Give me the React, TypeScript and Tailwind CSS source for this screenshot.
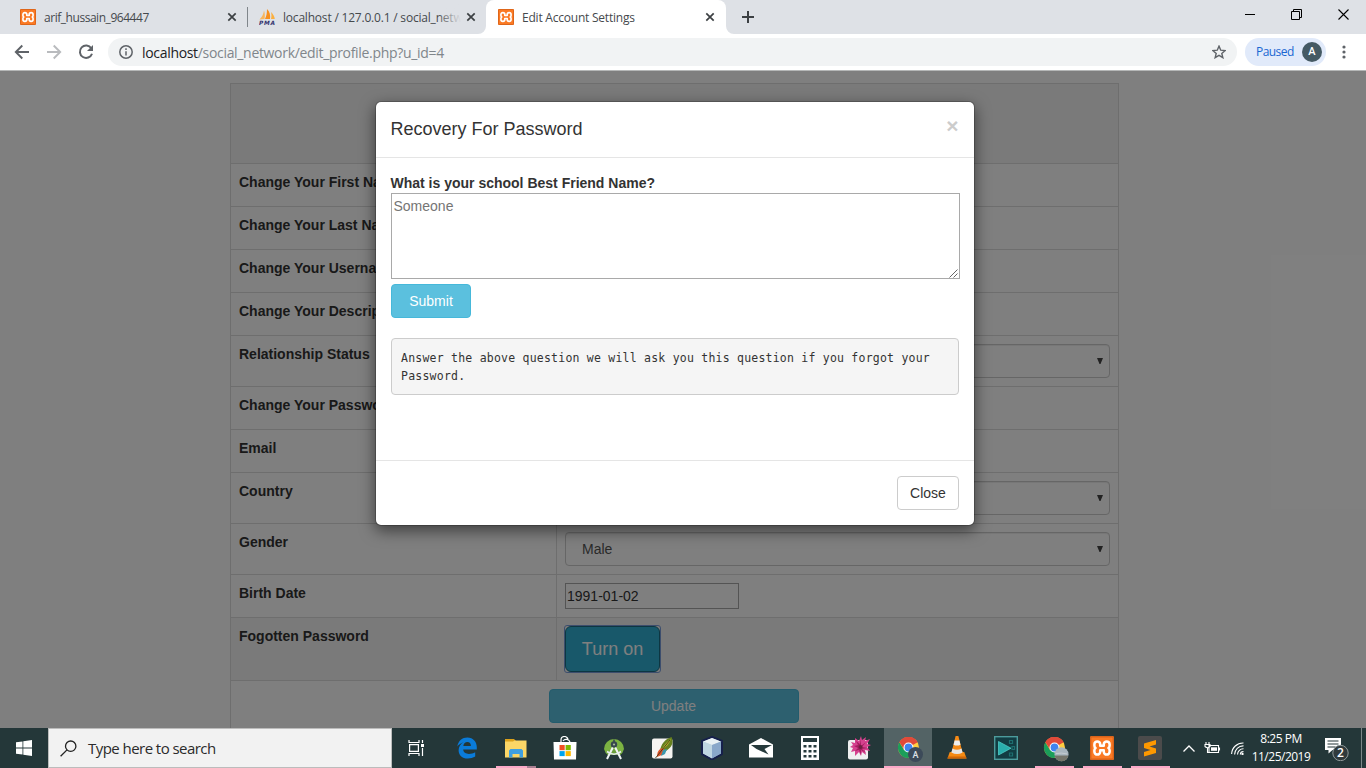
import type { ReactNode } from 'react';

const UI = "font-['Open_Sans','Noto_Sans',sans-serif]";

function XamppIcon({ size }: { size: number }) {
  return (
    <svg width={size} height={size} viewBox="0 0 24 24" className="shrink-0">
      <rect width="24" height="24" rx="1.5" fill="#fb7a24" />
      <rect x=".7" y=".7" width="22.6" height="22.6" rx="1.2" fill="none" stroke="#d9631a" strokeWidth="1.4" />
      <path d="M10.200 9.700h3.600V8.300a2.900 2.900 0 0 1 2.900-2.900a2.900 2.900 0 0 1 2.900 2.900v1.400q0 1.500-1.200 2.300q1.200.8 1.200 2.300v1.400a2.900 2.900 0 0 1-2.900 2.900a2.900 2.900 0 0 1-2.900-2.900v-1.400h-3.600v1.400a2.900 2.900 0 0 1-2.900 2.900a2.900 2.900 0 0 1-2.900-2.900v-1.400q0-1.500 1.200-2.300q-1.200-.8-1.200-2.300V8.300a2.900 2.900 0 0 1 2.900-2.900a2.900 2.900 0 0 1 2.900 2.900Z" fill="none" stroke="#fff" strokeWidth="2.500" strokeLinejoin="round" />
    </svg>
  );
}

function PmaIcon() {
  return (
    <svg width="16" height="16" viewBox="0 0 16 16" className="shrink-0">
      <path d="M.5 10.500C3 8 4.500 5 5 1.500c1 3 1 6 .5 8.500Z" fill="#f9b55c" />
      <path d="M6 10C7.500 7 8 4 8 0c3 3 3.500 6.500 3 10Z" fill="#f78f1e" />
      <path d="M12 10c.6-2.500.6-4.500 0-7 2 1.500 3.500 4.500 3.800 7Z" fill="#fbb040" />
      <text x="0" y="15.600" fontSize="5.800" fontWeight="700" fontStyle="italic" textLength="16" fill="#33336e" fontFamily="DejaVu Sans">PMA</text>
    </svg>
  );
}

function Cross({ color = '#3c4043' }: { color?: string }) {
  return (
    <svg width="10" height="10" viewBox="0 0 10 10" className="shrink-0">
      <path d="M1.300 1.300l7.400 7.400M8.700 1.300L1.300 8.700" stroke={color} strokeWidth="1.700" />
    </svg>
  );
}

function Tab({ icon, title, width, fade, line }: { icon: ReactNode; title: string; width: string; fade?: boolean; line?: boolean }) {
  return (
    <div className="relative flex h-full w-[239px] shrink-0 items-center pl-3">
      {icon}
      <div className="relative -top-px ml-2 w-[178px] overflow-hidden whitespace-nowrap">
        <span className={`text-[12px] leading-[18px] text-[#45494d] ${width}`}>{title}</span>
        {fade && <div className="absolute inset-y-0 right-0 w-6 bg-gradient-to-r from-[#dee1e6]/0 to-[#dee1e6]" />}
      </div>
      <span className="ml-[5px] flex"><Cross /></span>
      {line && <div className="absolute -right-px top-[7px] h-5 w-px bg-[#80868b]" />}
    </div>
  );
}

function Browser() {
  return (
    <>
      <div className="flex h-[34px] shrink-0 items-center bg-[#dee1e6] pl-2">
        <Tab icon={<XamppIcon size={16} />} title="arif_hussain_964447" width="tracking-[-0.46px]" line />
        <Tab icon={<PmaIcon />} title="localhost / 127.0.0.1 / social_network" width="tracking-[-0.2px]" fade />
        <div className="relative h-full w-60 shrink-0 rounded-t-lg bg-white">
          <Tab icon={<XamppIcon size={16} />} title="Edit Account Settings" width="tracking-[-0.22px]" />
          <svg width="8" height="8" className="absolute -left-2 bottom-0"><path d="M8 0a8 8 0 0 1-8 8h8Z" fill="#fff" /></svg>
          <svg width="8" height="8" className="absolute -right-2 bottom-0"><path d="M0 0a8 8 0 0 0 8 8H0Z" fill="#fff" /></svg>
        </div>
        <svg width="12" height="12" className="ml-4"><path d="M6 0v12M0 6h12" stroke="#3c4043" strokeWidth="2" /></svg>
        <div className="mb-[5px] ml-auto mr-[17px] flex items-center gap-9">
          <svg width="10" height="11"><path d="M0 5.500h10" stroke="#000" /></svg>
          <svg width="11" height="11" fill="none" stroke="#000"><path d="M.5 2.500h8v8h-8zM2.500 2.500v-2h8v8h-2" /></svg>
          <svg width="11" height="11"><path d="M.5.5l10 10M10.500.5l-10 10" stroke="#000" strokeWidth="1.100" /></svg>
        </div>
      </div>
      <div className="flex h-9 shrink-0 items-center bg-white">
        <svg width="16" height="16" viewBox="0 0 16 16" className="ml-[14px]" fill="none" stroke="#5f6368" strokeWidth="1.900"><path d="M15 8H2M8.300 1.500L1.800 8l6.500 6.500" /></svg>
        <svg width="16" height="16" viewBox="0 0 16 16" className="ml-4" fill="none" stroke="#b9bbbe" strokeWidth="1.900"><path d="M1 8h13M7.700 1.500L14.200 8l-6.500 6.500" /></svg>
        <svg width="16" height="16" viewBox="0 0 16 16" className="ml-4" fill="none" stroke="#5f6368" strokeWidth="2"><path d="M13.300 4.300A6.200 6.200 0 1 0 14 9.700" /><path d="M15 1v6H9Z" fill="#5f6368" stroke="none" /></svg>
        <div className="ml-[14px] flex h-7 w-[1129px] items-center rounded-full bg-[#f1f3f4] pl-[11px] pr-[11px]">
          <svg width="14" height="14" fill="none" stroke="#5f6368" strokeWidth="1.500"><circle cx="7" cy="7" r="6.200" /><path d="M7 6.200v4.200M7 3.300v1.600" /></svg>
          <span className="ml-[9px] text-[14px] tracking-[-0.32px] text-[#80868b]"><span className="text-[#202124]">localhost</span>/social_network/edit_profile.php?u_id=4</span>
          <svg width="14" height="14" viewBox="0 0 16 16" className="ml-auto" fill="none" stroke="#5f6368" strokeWidth="1.600"><path d="M8 1.300l2 4.600 5 .4-3.800 3.300 1.200 4.900L8 11.900l-4.400 2.600 1.200-4.900L1 6.300l5-.4Z" /></svg>
        </div>
        <div className="ml-2 flex h-7 w-[81px] items-center justify-between rounded-full bg-[#e1eafa] pl-[11px] pr-1">
          <span className="text-[12px] tracking-[-0.55px] text-[#1967d2]">Paused</span>
          <span className="flex size-5 items-center justify-center rounded-full bg-[#455a64] font-['Roboto',sans-serif] text-[11px] font-medium text-white">A</span>
        </div>
        <svg width="4" height="14" className="ml-4" fill="#5f6368"><circle cx="2" cy="2" r="1.600" /><circle cx="2" cy="7" r="1.600" /><circle cx="2" cy="12" r="1.600" /></svg>
      </div>
      <div className="h-px shrink-0 bg-[#b5b7b7]" />
    </>
  );
}

function Row({ label, height, children, dark }: { label: string; height: string; children?: ReactNode; dark?: boolean }) {
  return (
    <div className={`flex border-b border-[#ddd] ${height} ${dark ? 'bg-[#f5f5f5]' : ''}`}>
      <div className="w-[326px] shrink-0 border-r border-[#ddd] p-2 font-bold">{label}</div>
      <div className="grow p-2">{children}</div>
    </div>
  );
}

function SelectBox({ value }: { value: string }) {
  return (
    <div className="flex h-[34px] items-center justify-between rounded border border-[#ccc] pl-4 pr-[6px] text-[#555] shadow-[inset_0_1px_1px_rgba(0,0,0,0.075)]">
      <span>{value}</span>
      <svg width="6" height="7"><path d="M0 0h6L3.500 6h-1Z" fill="#444" /></svg>
    </div>
  );
}

function Page() {
  return (
    <div className="relative h-[657px] shrink-0 overflow-hidden bg-white font-['Liberation_Sans',Arial,sans-serif] text-[14px] leading-5 text-[#333]">
      <div className="ml-[230px] mt-3 w-[889px] border border-[#ddd]">
        <div className="h-20 border-b border-[#ddd] bg-[#f5f5f5]" />
        <Row label="Change Your First Name" height="h-[43px]" />
        <Row label="Change Your Last Name" height="h-[43px]" />
        <Row label="Change Your Username" height="h-[43px]" />
        <Row label="Change Your Description" height="h-[43px]" />
        <Row label="Relationship Status" height="h-[51px]"><SelectBox value="" /></Row>
        <Row label="Change Your Password" height="h-[43px]" />
        <Row label="Email" height="h-[43px]" />
        <Row label="Country" height="h-[51px]"><SelectBox value="" /></Row>
        <Row label="Gender" height="h-[51px]"><SelectBox value="Male" /></Row>
        <Row label="Birth Date" height="h-[43px]">
          <div className="h-[26px] w-[174px] border border-[#a9a9a9] px-px leading-6">1991-01-02</div>
        </Row>
        <Row label="Fogotten Password" height="h-[63px]" dark>
          <div className="h-[46px] w-[95px] rounded-md border border-[#1b6d85] bg-[#31b0d5] text-center text-[18px] leading-[44px] text-white">
            <div className="relative -left-[2px] -top-[2px] h-12 w-[97px] rounded-[3px] border border-[#7a9ddb] leading-[46px]">Turn on</div>
          </div>
        </Row>
        <div className="flex h-[60px] justify-center pr-[2px] pt-2">
          <div className="h-[34px] w-[250px] rounded border border-[#46b8da] bg-[#5bc0de] text-center leading-8 text-white">Update</div>
        </div>
      </div>
      <div className="absolute inset-0 flex items-start justify-center bg-black/50 pr-4 pt-[30px]">
        <div className="flex h-[425px] w-[600px] flex-col rounded-md border border-black/20 bg-white bg-clip-padding shadow-[0_5px_15px_rgba(0,0,0,0.5)]">
          <div className="flex h-14 shrink-0 justify-between border-b border-[#e5e5e5] pl-[14.5px] pr-[15.5px] pt-[14px]">
            <h4 className="text-[18px] leading-[26px]">Recovery For Password</h4>
            <span className="-mt-px text-[21px] font-bold leading-[21px] text-[#ccc]">×</span>
          </div>
          <div className="flex h-[302px] shrink-0 flex-col items-start px-[15px] pt-[15px]">
            <strong className="-ml-[0.5px]">What is your school Best Friend Name?</strong>
            <div className="relative h-[86px] w-[569px] shrink-0 border border-[#a9a9a9] px-[1.5px] py-[2px] text-[#757575]">
              Someone
              <svg width="9" height="9" className="absolute bottom-0 right-px"><path d="M.5 8.500l8-8M4.500 8.500l4-4" stroke="#555" strokeWidth=".9" /></svg>
            </div>
            <div className="mt-[5px] h-[34px] w-20 shrink-0 rounded border border-[#46b8da] bg-[#5bc0de] text-center leading-8 text-white">Submit</div>
            <pre className="mt-5 h-[57px] w-full shrink-0 rounded border border-[#ccc] bg-[#f5f5f5] px-[9px] py-[9.5px] font-['DejaVu_Sans_Mono',monospace] text-[11.500px] leading-[18.500px] tracking-[0.225px]">{'Answer the above question we will ask you this question if you forgot your\nPassword.'}</pre>
          </div>
          <div className="flex grow justify-end border-t border-[#e5e5e5] px-[15px] pt-[15px]">
            <div className="h-[34px] w-[62px] rounded border border-[#ccc] text-center leading-8">Close</div>
          </div>
        </div>
      </div>
    </div>
  );
}

function ChromeMark({ children }: { children: ReactNode }) {
  return (
    <svg width="26" height="26" viewBox="0 0 26 26">
      <circle cx="11.500" cy="11.500" r="10.500" fill="#ffcd40" />
      <path d="M11.500 11.500L2.400 6.200a10.500 10.500 0 0 1 18.200 0Z" fill="#e04a3a" />
      <path d="M2.400 6.200A10.500 10.500 0 0 0 11.500 22l4.500-8L7 14Z" fill="#1b9e5a" />
      <path d="M2.400 6.200A10.500 10.500 0 0 1 20.600 6.200H11.500L6.800 13Z" fill="#e04a3a" />
      <circle cx="11.500" cy="11.500" r="5" fill="#fff" />
      <circle cx="11.500" cy="11.500" r="3.900" fill="#3f84f0" />
      {children}
    </svg>
  );
}

const ICONS: ReactNode[] = [
  <svg width="20" height="22" viewBox="0 0 20 22"><path d="M.3 9.600C1.200 3.600 5.400.5 10.300.5 16.300.5 19.800 5 19.800 10v2.600H6.200c.2 3 2.700 4.300 5.700 4.300 2.300 0 4.500-.7 6.300-1.700v4.400c-2.100 1.200-4.600 1.900-7.300 1.900C5 21.500 1.600 18 1.600 13.200c0-3.700 2-6.500 5-8C4 6 1.800 7.300.3 9.600ZM6.300 8.900h7.600c0-2.400-1.300-3.800-3.500-3.800S6.700 6.600 6.300 8.900Z" fill="#0a7bd9" /></svg>,
  <svg width="22" height="19" viewBox="0 0 22 19"><path d="M0 0h9l2 2v3H0Z" fill="#dca11b" /><path d="M0 2.500h8l1.500-1H21.500v17H0Z" fill="#fbd667" /><path d="M4 18.500v-7l1.500-1.500h11l1.500 1.500v7h-3.500V15h-7v3.500Z" fill="#3f9fe0" /></svg>,
  <svg width="24" height="24" viewBox="0 0 24 24"><path d="M8 7V4a3.500 3.500 0 0 1 7 0M10 5a4 4 0 0 1 7 1" fill="none" stroke="#fff" strokeWidth="1.200" /><path d="M.5 6h23L23 23.500H1Z" fill="#fff" /><path d="M6.500 9h5.200v5.200H6.500z" fill="#f25022" /><path d="M12.600 9h5.200v5.200h-5.200z" fill="#7fba00" /><path d="M6.500 15.100h5.200v5H6.500z" fill="#00a4ef" /><path d="M12.600 15.100h5.200v5h-5.200z" fill="#ffb900" /></svg>,
  <svg width="22" height="24" viewBox="0 0 22 24"><path d="M1 13a10 10 0 1 1 20 0q-1 4-4 6H5q-3-2-4-6Z" fill="#7cb342" /><path d="M3 16q8-5 16 0l-2 3H5Z" fill="#6a9f3b" /><path d="M10.200 3.500h1.600v3h-1.600z" fill="#37474f" /><circle cx="11" cy="8.500" r="3.200" fill="#37474f" /><circle cx="11" cy="8.500" r="1.100" fill="#a6bd92" /><path d="M9.800 11.500L4 23M12.200 11.500L18 23" stroke="#f1f5f6" strokeWidth="2" /><path d="M4 15.500q7 5.500 14 0" fill="none" stroke="#e8eef0" strokeWidth="1.600" /></svg>,
  <svg width="22" height="22" viewBox="0 0 22 22"><rect x="0" y="1.500" width="20.500" height="20" rx="2" fill="#f5f4f1" /><path d="M8 14C9 7 13 2 19.500 0c2 4 1 9-3 12l-5 4Z" fill="#66801f" /><path d="M10 12q4-7 9-10-2 6-8 10Z" fill="#b5b52b" /><path d="M5 20c0-5 2-8 5-9l3 2-1 4Z" fill="#de5328" /><path d="M9 19l2-6 4-1-2 5Z" fill="#3b98ad" /><path d="M3.500 21L18 3" stroke="#463816" strokeWidth=".9" /></svg>,
  <svg width="22" height="24" viewBox="0 0 22 24"><path d="M11 1l10 4v13l-10 5.500L1 18V5Z" fill="#bfd3df" stroke="#16204b" strokeWidth="2" strokeLinejoin="round" /><path d="M2 5.600L11 9l9-3.400L11 2Z" fill="#e8f1f4" /><path d="M11 9l9-3.400V17.500L11 22.500Z" fill="#89a8ca" /><path d="M2 5.600L11 9v13.500L2 17.500Z" fill="#bfd6e2" /></svg>,
  <svg width="24" height="20" viewBox="0 0 24 20"><path d="M0 6.500L12 0l12 6.500v13H0Z" fill="#fff" /><path d="M2 7h21l-7.500 4 4 5.500L7.500 11Z" fill="#263a3c" /></svg>,
  <svg width="18" height="24" viewBox="0 0 18 24"><path d="M0 0h18v24H0Z" fill="#fff" /><path d="M2 2h14v4H2zM2.500 9h3v2.500h-3zM7.500 9h3v2.500h-3zM12.500 9h3v2.500h-3zM2.500 14h3v2.500h-3zM7.500 14h3v2.500h-3zM12.500 14h3v2.500h-3zM2.500 19h3v2.500h-3zM7.500 19h3v2.500h-3zM12.500 19h3v2.500h-3z" fill="#263a3c" /></svg>,
  <svg width="24" height="24" viewBox="0 0 24 24"><rect x="1" y="4" width="20" height="19.500" rx="2" fill="#efeff0" /><path d="M14 0l1 4 4-3-1 4 5-2-3 5 4 1-4 2 3 4-5-1 1 5-4-3-1 4-2-4-4 4v-5l-4 1 2-4-3-1 3-2-2-3 4 1V2l4 3Z" fill="#d5418e" /><path d="M14 3v7l5-4-4 5 6 1-6 1 4 4-5-3v5l-2-5-4 1 3-3-4-2 4-1-2-4 4 3Z" fill="#a51e61" /><circle cx="13.500" cy="11" r="2" fill="#6f1e42" /></svg>,
  <ChromeMark><circle cx="18.500" cy="18.500" r="7.500" fill="#3c4a59" /><text x="18.500" y="21.800" fill="#dde2e6" fontSize="9" fontWeight="500" textAnchor="middle" fontFamily="Roboto">A</text></ChromeMark>,
  <svg width="20" height="23" viewBox="0 0 22 23" preserveAspectRatio="none"><path d="M3 16h16l2.500 6.500H.5Z" fill="#f48b13" /><path d="M9.500 0h3l5 18q-6.500 3-13 0Z" fill="#f58a16" /><path d="M8.400 4.500h5.300l1.200 4.200q-4 1.700-7.700 0Z" fill="#eeeeed" /><path d="M6 12.500q5 2.500 10 0l1.200 4q-6 3-12.400 0Z" fill="#e6e5e3" /><path d="M.5 22.500l.7-2h19.600l.7 2Z" fill="#cf6708" /></svg>,
  <svg width="24" height="24" viewBox="0 0 24 24"><rect x=".7" y=".7" width="22.600" height="22.600" fill="#123d43" stroke="#4c9b9c" strokeWidth="1.400" /><path d="M4.500 5.500l12.500 6.700L4.500 19Z" fill="#2aaeac" stroke="#54d6cf" strokeWidth=".7" /><path d="M15.500 4.500h3v3h-3zM18 10.500h2.500v3H18zM15.500 17h3v3h-3z" fill="none" stroke="#1d6f70" strokeWidth="1.200" /></svg>,
  <ChromeMark><circle cx="18.500" cy="18.300" r="7" fill="#a9b6be" /><path d="M11.600 19.500h13.800a7 7 0 0 1-13.800 0Z" fill="#75756a" /><path d="M13 17.600q5-1.200 11 .3" stroke="#c5ccd0" strokeWidth="1" fill="none" /></ChromeMark>,
  <XamppIcon size={24} />,
  <svg width="24" height="24" viewBox="0 0 24 24"><rect width="24" height="24" rx="2" fill="#4b4b4b" /><path d="M18 4v4.500L11.500 10.500L18 12.500V17L6 20.500V16l6.500-2L6 12V7.500Z" fill="#ff9800" /></svg>,
];

const CELLS = [
  '', '', '', '', '', '', '', '', '', 'bg-[#536365]', '', '', '', '-ml-px', '-ml-px',
];
const SHIFT = [
  '', '', 'pb-px', 'pb-px', '', 'pb-px', '', '', '', 'pl-1 pt-[2px]', 'pb-px', '', 'pl-[2px] pt-[2px]', 'pr-[2px]', 'pr-[2px]',
];

function Taskbar() {
  return (
    <div className="flex h-10 shrink-0 items-stretch bg-[#243739] text-white">
      <div className="flex w-12 items-center justify-center">
        <svg width="16" height="16" viewBox="0 0 16 16"><path d="M0 2.300l6.500-.9v6.100H0ZM7.300 1.300L16 0v7.500H7.300ZM0 8.400h6.500v6.200L0 13.700ZM7.300 8.400H16V16l-8.700-1.200Z" fill="#fff" /></svg>
      </div>
      <div className="flex w-[344px] items-center border border-[#bcbcbc] bg-[#f2f2f2] pl-[11px]">
        <svg width="17" height="17" fill="none" stroke="#222" strokeWidth="1.300"><circle cx="10.700" cy="6.200" r="5.200" /><path d="M7 9.900L.6 16.300" /></svg>
        <span className="ml-[11px] text-[15px] tracking-[-0.55px] text-[#2b2b2b]">Type here to search</span>
      </div>
      <div className="mr-[3px] flex w-12 items-center justify-center">
        <svg width="17" height="16" fill="none" stroke="#fff" strokeWidth="1.200"><path d="M1 0v2.500h10V0M1 16v-2.500h10V16M1.600 4.600h8.800v6.800H1.600zM14.500 0v3M14.500 8v8" /><path d="M13 4h3v3h-3z" fill="#fff" stroke="none" /></svg>
      </div>
      <div className="flex gap-px">
        {ICONS.map((icon, i) => (
          <div key={i} className={`relative flex w-12 items-center justify-center ${CELLS[i]} ${SHIFT[i]}`}>
            {icon}
            {i === 1 && <div className="absolute bottom-0 left-1 flex h-[2px] w-10"><div className="w-[31px] bg-[#fba9c8]" /><div className="w-[9px] bg-[#a87f92]" /></div>}
            {i === 9 && <div className="absolute inset-x-0 bottom-0 h-[2px] bg-[#fba9c8]" />}
            {i > 11 && <div className="absolute bottom-0 left-1 h-[2px] w-[39px] bg-[#fba9c8]" />}
          </div>
        ))}
      </div>
      <div className="ml-2 flex items-center">
        <svg width="12" height="7" fill="none" stroke="#fff" strokeWidth="1.300"><path d="M.5 6.500L6 1l5.500 5.500" /></svg>
        <svg width="17" height="12" className="ml-[9px]" fill="none" stroke="#fff" strokeWidth="1.100"><path d="M5 3.500h9.500v7h-9.500zM15.500 5.500v3M2 0v2M5 0v2M1 2.500h5v2q-2.500 2.500-5 0ZM3.500 6v4.500H5" /><path d="M7 5.300h6v3.500H7z" fill="#fff" stroke="none" /></svg>
        <svg width="13" height="13" className="ml-[10px]" fill="none" stroke="#fff" strokeWidth="1.100"><path d="M.6 12A11.400 11.400 0 0 1 12.500 1M3.600 12.500a8.600 8.600 0 0 1 8.900-8.600M6.500 12.500a5.900 5.900 0 0 1 6-5.700M9.300 12.500a3.100 3.100 0 0 1 3.200-2.900" /><path d="M10.500 11h2v2h-2z" fill="#fff" stroke="none" /></svg>
      </div>
      <div className="ml-[6px] w-[62px] whitespace-nowrap pt-[2px] text-center text-[12px] leading-[18px] tracking-[-0.5px]">
        <div>8:25 PM</div>
        <div>11/25/2019</div>
      </div>
      <div className="ml-3 flex items-center">
        <svg width="26" height="26" viewBox="0 0 26 26"><path d="M1 3h16v12H8.500l-4 3.500V15H1Z" fill="#fff" /><path d="M3.500 6h11M3.500 9h11M3.500 12h8" stroke="#243739" strokeWidth="1.200" /><circle cx="16.500" cy="18" r="7.700" fill="#303a3c" stroke="#8e9899" /><text x="16.500" y="22.300" fill="#fff" fontSize="12" fontWeight="600" textAnchor="middle">2</text></svg>
      </div>
      <div className="ml-auto w-[5px] border-l border-[#7b8788]" />
    </div>
  );
}

export default function App() {
  return (
    <div className={`flex h-screen w-[1366px] flex-col overflow-hidden ${UI}`}>
      <Browser />
      <Page />
      <Taskbar />
    </div>
  );
}
